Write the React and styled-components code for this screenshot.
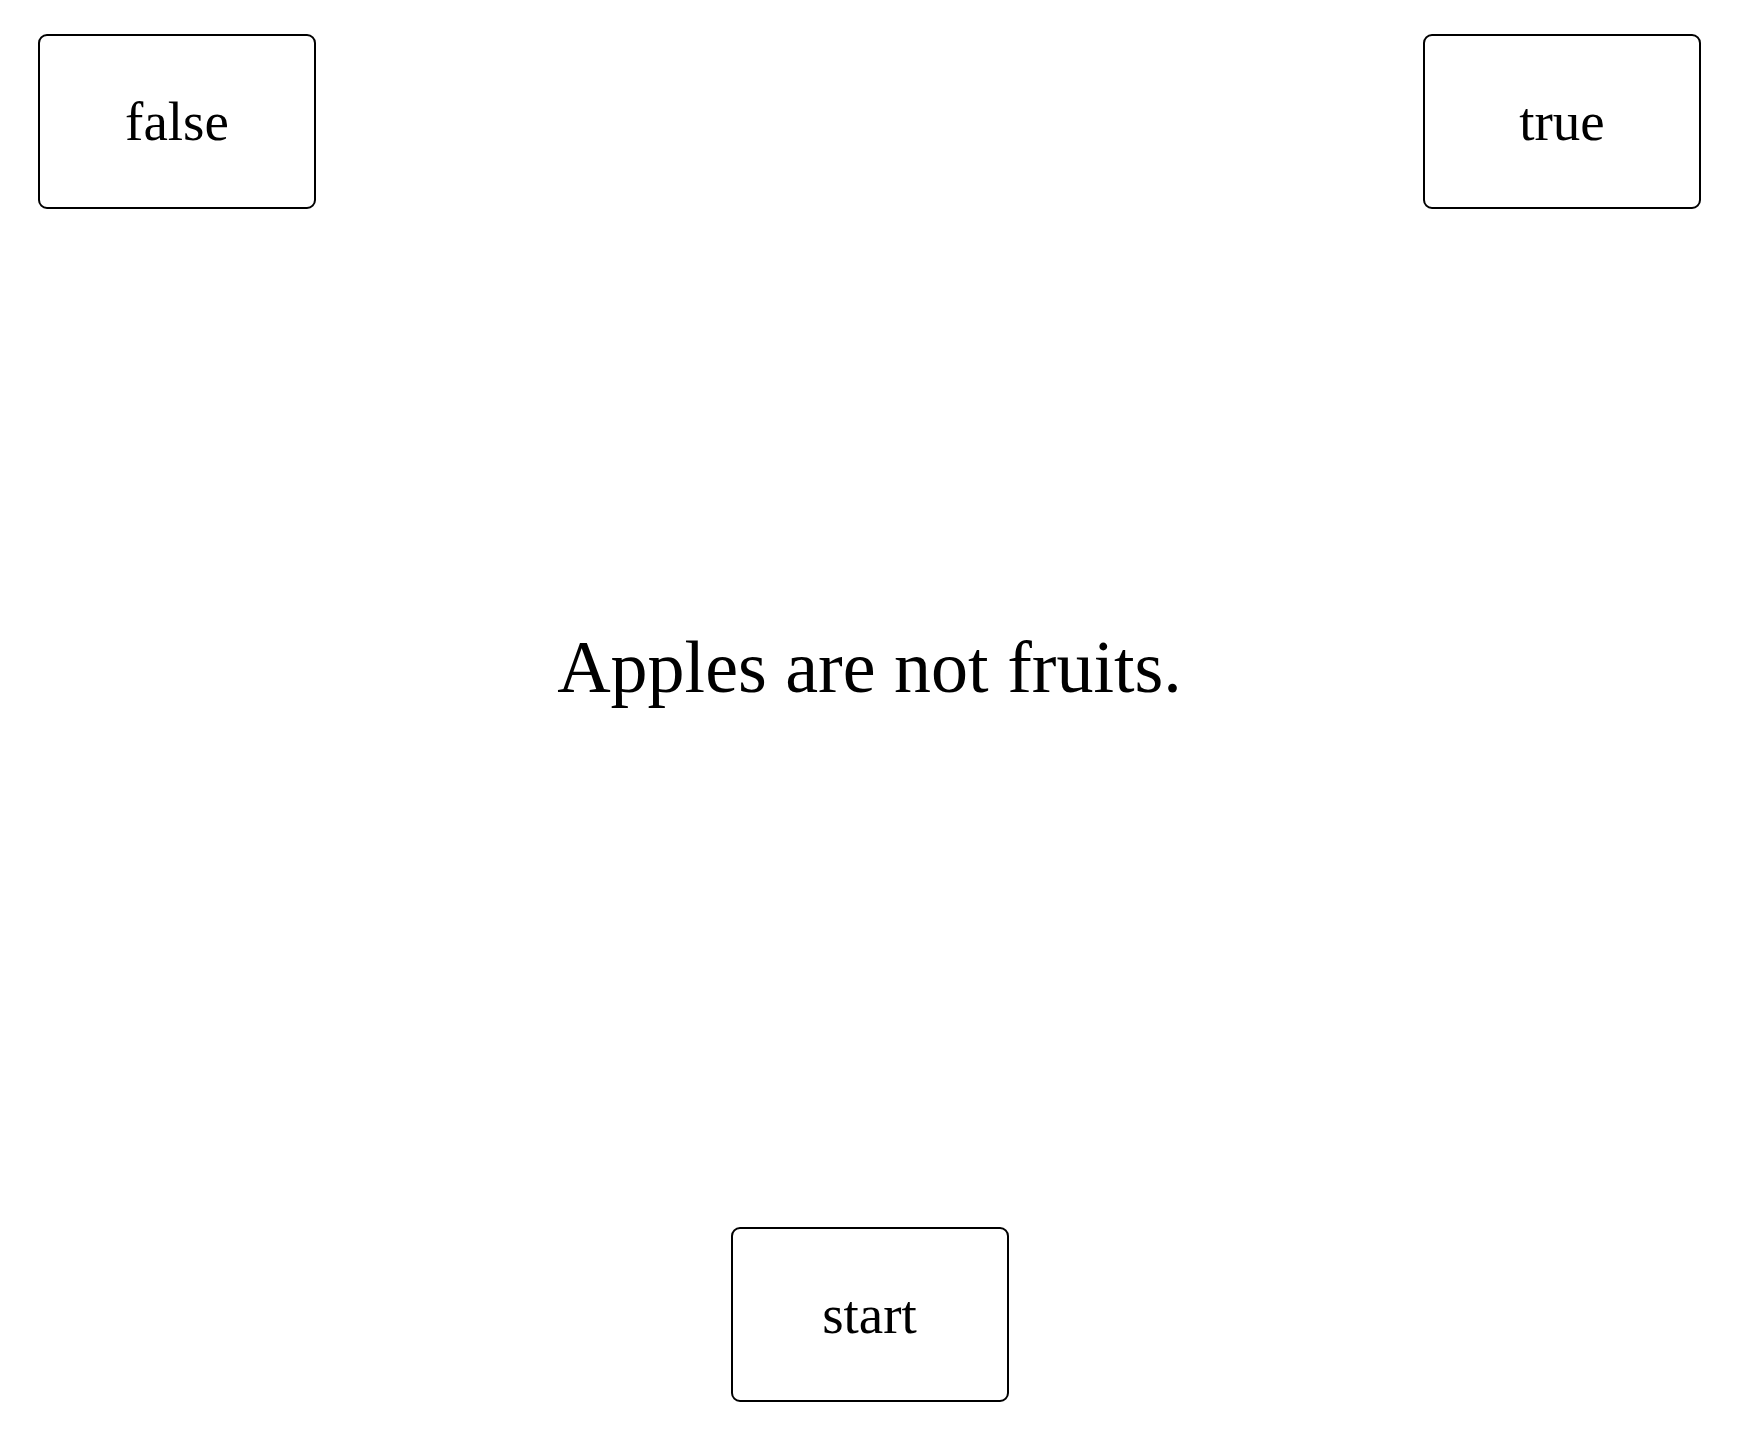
import React from "react";
import styled, { createGlobalStyle } from "styled-components";

const GlobalStyle = createGlobalStyle`
  html, body {
    margin: 0;
    padding: 0;
    background: #ffffff;
  }
  body {
    font-family: "Liberation Serif", "Times New Roman", serif;
    color: #000000;
  }
`;

const Page = styled.div`
  box-sizing: border-box;
  min-height: 100vh;
  display: flex;
  flex-direction: column;
  padding: 34px 41px 30px 38px;
`;

const TopBar = styled.div`
  display: flex;
  justify-content: space-between;
  align-items: flex-start;
`;

const BottomBar = styled.div`
  margin-top: auto;
  display: flex;
  justify-content: center;
`;

const ChoiceButton = styled.button`
  box-sizing: border-box;
  width: 278px;
  height: 175px;
  display: flex;
  align-items: center;
  justify-content: center;
  padding: 0;
  background: #ffffff;
  border: 2px solid #000000;
  border-radius: 9px;
  font-family: "Liberation Serif", "Times New Roman", serif;
  font-size: 55px;
  line-height: normal;
  color: #000000;
  cursor: pointer;
`;

const Statement = styled.p`
  margin: 416px 0 0;
  text-align: center;
  font-size: 74px;
  line-height: normal;
  font-weight: 400;
`;

export default function App() {
  return (
    <>
      <GlobalStyle />
      <Page>
        <TopBar>
          <ChoiceButton>false</ChoiceButton>
          <ChoiceButton>true</ChoiceButton>
        </TopBar>
        <Statement>Apples are not fruits.</Statement>
        <BottomBar>
          <ChoiceButton>start</ChoiceButton>
        </BottomBar>
      </Page>
    </>
  );
}
